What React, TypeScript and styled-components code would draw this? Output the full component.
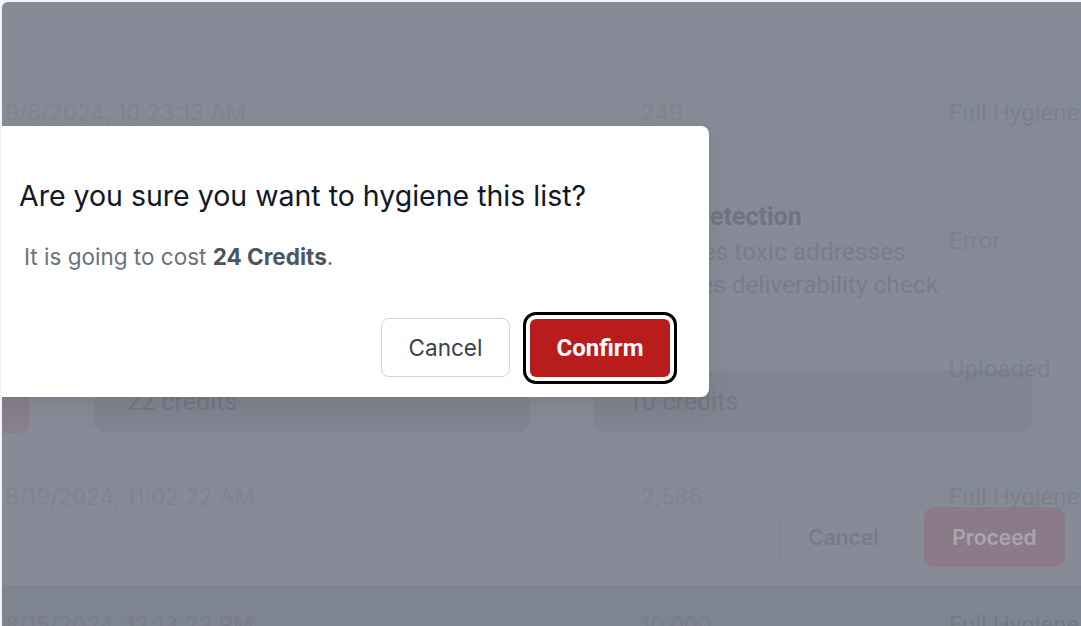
import styled, { createGlobalStyle } from "styled-components";

interface ListRow {
    date: string;
    count: string;
    status: string;
    tone: "green" | "red" | "blue" | "teal";
}

const rows: ListRow[] = [
    { date: "9/6/2024, 10:23:13 AM", count: "249", status: "Full Hygiene", tone: "green" },
    { date: "9/2/2024, 4:41:07 PM", count: "1,120", status: "Error", tone: "red" },
    { date: "8/28/2024, 9:15:40 AM", count: "532", status: "Uploaded", tone: "blue" },
    { date: "8/19/2024, 11:02:22 AM", count: "2,586", status: "Full Hygiene", tone: "green" },
    { date: "8/15/2024, 12:13:23 PM", count: "10,000", status: "Full Hygiene", tone: "teal" },
];

const toneBg = {
    green: "rgba(120, 150, 140, 0.035)",
    red: "rgba(170, 110, 120, 0.03)",
    blue: "rgba(110, 130, 170, 0.035)",
    teal: "rgba(110, 170, 170, 0.09)",
};

const GlobalStyle = createGlobalStyle`
    html, body {
        margin: 0;
        padding: 0;
        background: #f3f3f8;
        font-family: Inter, "Noto Sans", sans-serif;
    }
    * { box-sizing: border-box; }
`;

export default function App() {
    return (
        <>
            <GlobalStyle />
            <Frame>
                <Page>
                    <Table>
                        {rows.map((row) => (
                            <Row key={row.date}>
                                <Cell>{row.date}</Cell>
                                <Cell>{row.count}</Cell>
                                <Badge $tone={row.tone}>{row.status}</Badge>
                            </Row>
                        ))}
                    </Table>

                    <Sheet>
                        <Plans>
                            <Chip />
                            <PlanCard>
                                <PlanBody>
                                    <PlanTitle>Full Hygiene</PlanTitle>
                                    <PlanLine>Validates every address</PlanLine>
                                    <PlanLine>Includes deliverability check</PlanLine>
                                </PlanBody>
                                <PlanPrice>22 credits</PlanPrice>
                            </PlanCard>
                            <PlanCard>
                                <PlanBody>
                                    <PlanTitle>Toxic Detection</PlanTitle>
                                    <PlanLine>Identifies toxic addresses</PlanLine>
                                    <PlanLine>Excludes deliverability check</PlanLine>
                                </PlanBody>
                                <PlanPrice>10 credits</PlanPrice>
                            </PlanCard>
                        </Plans>
                        <SheetActions>
                            <GhostButton>Cancel</GhostButton>
                            <FadedPrimary>Proceed</FadedPrimary>
                        </SheetActions>
                    </Sheet>

                    <Modal>
                        <ModalTitle>Are you sure you want to hygiene this list?</ModalTitle>
                        <ModalText>
                            It is going to cost <strong>24 Credits</strong>.
                        </ModalText>
                        <ModalActions>
                            <CancelButton>Cancel</CancelButton>
                            <ConfirmButton>Confirm</ConfirmButton>
                        </ModalActions>
                    </Modal>
                </Page>
            </Frame>
        </>
    );
}

const Frame = styled.div`
    height: 626px;
    padding: 2px 0 0 2px;
`;

const Page = styled.div`
    position: relative;
    height: 100%;
    overflow: hidden;
    border-top-left-radius: 6px;
    background: #7f8491;
`;

const Table = styled.div`
    padding-top: 47px;
`;

const Row = styled.div`
    display: grid;
    grid-template-columns: 636px 296px 1fr;
    align-items: center;
    height: 128px;
    padding-left: 3px;
    border-bottom: 1px solid rgba(0, 0, 0, 0.012);
`;

const Cell = styled.div`
    font-size: 22.5px;
    color: #787d89;
    white-space: nowrap;
`;

const Badge = styled.div<{ $tone: keyof typeof toneBg }>`
    justify-self: start;
    padding: 6px 12px;
    border-radius: 10px;
    background: ${(p) => toneBg[p.$tone]};
    font-family: Roboto, sans-serif;
    font-size: 24px;
    color: #747985;
    white-space: nowrap;
`;

const Sheet = styled.div`
    position: absolute;
    top: 0;
    left: 0;
    right: 0;
    height: 583px;
    background: rgba(255, 255, 255, 0.06);
    padding: 183px 16px 0 0;
`;

const Plans = styled.div`
    display: grid;
    grid-template-columns: 27px 437px 438px;
    column-gap: 64px;
`;

const Chip = styled.div`
    align-self: end;
    height: 48px;
    border-radius: 0 8px 8px 0;
    background: #8a808d;
`;

const PlanCard = styled.div`
    display: flex;
    flex-direction: column;
    height: 248px;
    border: 1px solid rgba(0, 0, 0, 0.02);
    border-radius: 12px;
    overflow: hidden;
`;

const PlanBody = styled.div`
    flex: 1;
    padding: 16px 33px 0;
`;

const PlanTitle = styled.div`
    font-family: Roboto, sans-serif;
    font-size: 25px;
    font-weight: 700;
    line-height: 30px;
    color: #6f7480;
    margin-bottom: 3px;
`;

const PlanLine = styled.div`
    font-family: Roboto, sans-serif;
    font-size: 24.5px;
    line-height: 33px;
    color: #787d89;
    white-space: nowrap;
`;

const PlanPrice = styled.div`
    height: 61px;
    display: flex;
    align-items: center;
    padding-left: 33px;
    background: rgba(0, 0, 0, 0.04);
    font-family: Roboto, sans-serif;
    font-size: 25px;
    color: #737884;
`;

const SheetActions = styled.div`
    display: flex;
    justify-content: flex-end;
    gap: 17px;
    margin-top: 74px;
`;

const GhostButton = styled.button`
    width: 127px;
    height: 60px;
    border: 1px solid rgba(0, 0, 0, 0.04);
    border-radius: 10px;
    background: transparent;
    font-family: Inter, sans-serif;
    font-size: 21px;
    font-weight: 600;
    color: #767b87;
`;

const FadedPrimary = styled(GhostButton)`
    width: 141px;
    border: none;
    background: #8b7b88;
    color: #a9a5b2;
`;

const Modal = styled.div`
    position: absolute;
    top: 124px;
    left: -20px;
    width: 727px;
    height: 271px;
    padding: 54px 39px 0 37px;
    background: #ffffff;
    border-radius: 8px;
    box-shadow: 0 10px 25px rgba(0, 0, 0, 0.08);
`;

const ModalTitle = styled.h2`
    margin: 0;
    font-size: 28.5px;
    font-weight: 400;
    line-height: 32px;
    color: #111827;
    white-space: nowrap;
`;

const ModalText = styled.p`
    margin: 31px 0 0 5px;
    font-size: 22.5px;
    line-height: 28px;
    color: #6b7280;
    strong {
        font-weight: 700;
        color: #4b5563;
    }
`;

const ModalActions = styled.div`
    display: flex;
    justify-content: flex-end;
    align-items: center;
    gap: 20px;
    margin-top: 47px;
`;

const CancelButton = styled.button`
    width: 129px;
    height: 59px;
    border: 1px solid #d1d5db;
    border-radius: 8px;
    background: #ffffff;
    font-family: Inter, sans-serif;
    font-size: 22.5px;
    color: #374151;
`;

const ConfirmButton = styled.button`
    width: 140px;
    height: 58px;
    border: none;
    border-radius: 6px;
    background: #b91c1c;
    font-family: Roboto, sans-serif;
    font-size: 24px;
    font-weight: 700;
    color: #ffffff;
    box-shadow: 0 0 0 4px #ffffff, 0 0 0 7px #000000;
`;
